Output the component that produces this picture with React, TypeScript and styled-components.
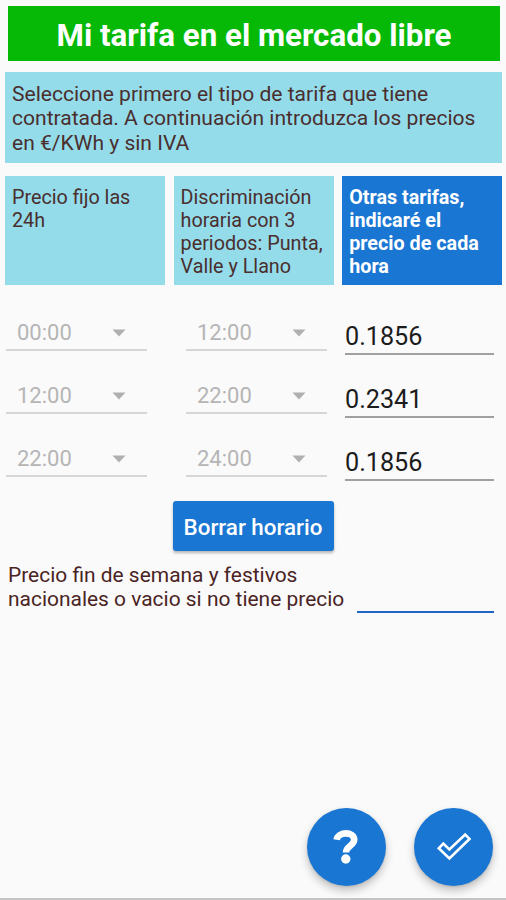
import React from 'react';
import styled, { createGlobalStyle } from 'styled-components';

const GlobalStyle = createGlobalStyle`
  * { box-sizing: border-box; }
  body { margin: 0; background: #fafafa; font-family: Roboto, sans-serif; }
  button, input { font-family: inherit; }
`;

const Screen = styled.main`
  display: flex;
  flex-direction: column;
  height: 900px;
  width: 506px;
  overflow: hidden;
  background: #fafafa;
  border-bottom: 2px solid #c4c4c4;
`;

const Title = styled.h1`
  margin: 6px 6px 0 8px;
  height: 55px;
  flex: none;
  background: #06b906;
  color: #fff;
  font-size: 31.3px;
  font-weight: 700;
  line-height: 59px;
  text-align: center;
  white-space: nowrap;
`;

const Intro = styled.p`
  margin: 11px 4px 0 5px;
  height: 91px;
  flex: none;
  padding: 10px 7px;
  background: #94dcea;
  color: #4a2e2e;
  font-size: 21.05px;
  line-height: 24.4px;
  white-space: nowrap;
`;

const TariffGrid = styled.section`
  display: grid;
  grid-template-columns: repeat(3, 160px);
  column-gap: 8.6px;
  height: 109px;
  flex: none;
  margin: 13px 4px 0 5px;
`;

const TariffCard = styled.button<{ $selected?: boolean }>`
  display: flex;
  align-items: flex-start;
  border: 0;
  padding: 9.5px 7px 0;
  text-align: left;
  white-space: nowrap;
  font-size: 19.75px;
  line-height: 23px;
  background: ${(p) => (p.$selected ? '#1976d2' : '#94dcea')};
  color: ${(p) => (p.$selected ? '#fff' : '#4a2e2e')};
  font-weight: ${(p) => (p.$selected ? 700 : 400)};
`;

const Schedule = styled.section`
  flex: none;
  margin-top: 29px;
  height: 187px;
`;

const HourRow = styled.div`
  display: grid;
  grid-template-columns: 141px 141px 149px;
  column-gap: 39px;
  height: 63.2px;
  padding-left: 6px;
  align-items: start;
`;

const Spinner = styled.div`
  display: flex;
  align-items: center;
  justify-content: space-between;
  height: 37px;
  padding: 2px 21px 0 11px;
  border-bottom: 2px solid #d6d6d6;
  color: #b5b5b5;
  font-size: 22px;
  line-height: 35px;
`;

const PriceInput = styled.input`
  display: block;
  width: 149px;
  height: 41px;
  margin-left: -21px;
  padding: 5px 0 0;
  border: 0;
  border-bottom: 2px solid #a0a0a0;
  border-radius: 0;
  background: transparent;
  color: #1c1c1c;
  font-size: 25.2px;
  outline: none;
`;

const ClearButton = styled.button`
  align-self: center;
  flex: none;
  width: 161px;
  height: 50px;
  border: 0;
  border-radius: 3px;
  padding: 2px 0 0;
  background: #1976d2;
  color: #fff;
  font-size: 22.4px;
  font-weight: 500;
  white-space: nowrap;
  box-shadow: 0 2px 3px rgba(0, 0, 0, 0.28);
`;

const HolidayRow = styled.label`
  display: flex;
  align-items: flex-start;
  justify-content: space-between;
  flex: none;
  height: 62px;
  margin: 11.5px 12px 0 8px;
  color: #4a2424;
  font-size: 20.95px;
  line-height: 24.4px;
  white-space: nowrap;
`;

const HolidayInput = styled.input`
  width: 137px;
  height: 50.5px;
  padding: 0;
  border: 0;
  border-bottom: 2.4px solid #1f66c4;
  border-radius: 0;
  background: transparent;
  outline: none;
`;

const Actions = styled.footer`
  display: flex;
  justify-content: flex-end;
  gap: 28px;
  margin: auto 13px 12px 0;
`;

const RoundButton = styled.button`
  display: grid;
  place-items: center;
  width: 79px;
  height: 78px;
  padding: 0;
  border: 0;
  border-radius: 50%;
  background: #1976d2;
  color: #fff;
  box-shadow: 0 5px 9px rgba(0, 0, 0, 0.22), 0 1px 3px rgba(0, 0, 0, 0.1);

  svg { display: block; }
`;

const Caret = () => (
  <svg width="14" height="8" viewBox="0 0 14 8">
    <path d="M0.5 0.5h13L7 7.5z" fill="#b0b0b0" />
  </svg>
);

const rows = [
  { from: '00:00', to: '12:00', price: '0.1856' },
  { from: '12:00', to: '22:00', price: '0.2341' },
  { from: '22:00', to: '24:00', price: '0.1856' },
];

export default function App() {
  return (
    <>
      <GlobalStyle />
      <Screen>
        <Title>Mi tarifa en el mercado libre</Title>
        <Intro>
          Seleccione primero el tipo de tarifa que tiene<br />
          contratada. A continuación introduzca los precios<br />
          en €/KWh y sin IVA
        </Intro>
        <TariffGrid>
          <TariffCard>Precio fijo las<br />24h</TariffCard>
          <TariffCard>Discriminación<br />horaria con 3<br />periodos: Punta,<br />Valle y Llano</TariffCard>
          <TariffCard $selected>Otras tarifas,<br />indicaré el<br />precio de cada<br />hora</TariffCard>
        </TariffGrid>
        <Schedule>
          {rows.map((row) => (
            <HourRow key={row.from}>
              <Spinner>{row.from}<Caret /></Spinner>
              <Spinner>{row.to}<Caret /></Spinner>
              <PriceInput defaultValue={row.price} />
            </HourRow>
          ))}
        </Schedule>
        <ClearButton>Borrar horario</ClearButton>
        <HolidayRow>
          <span>Precio fin de semana y festivos<br />nacionales o vacio si no tiene precio</span>
          <HolidayInput />
        </HolidayRow>
        <Actions>
          <RoundButton aria-label="Ayuda">
            <svg width="28" height="36" viewBox="0 0 28 36" fill="none">
              <path d="M3.6 10.8C5 2.2 21.2 2.2 21.2 10.8C21.2 16.6 13 17 13 23.6" stroke="currentColor" strokeWidth="6.6" />
              <circle cx="12.8" cy="30" r="4.7" fill="currentColor" />
            </svg>
          </RoundButton>
          <RoundButton aria-label="Aceptar">
            <svg width="36" height="30" viewBox="0 0 36 30" fill="none">
              <path d="M2.7 16.3L7.3 11.6L13.4 17.5L29.2 2.5L33.5 6.9L13.4 26.5Z" stroke="currentColor" strokeWidth="2.6" />
            </svg>
          </RoundButton>
        </Actions>
      </Screen>
    </>
  );
}
